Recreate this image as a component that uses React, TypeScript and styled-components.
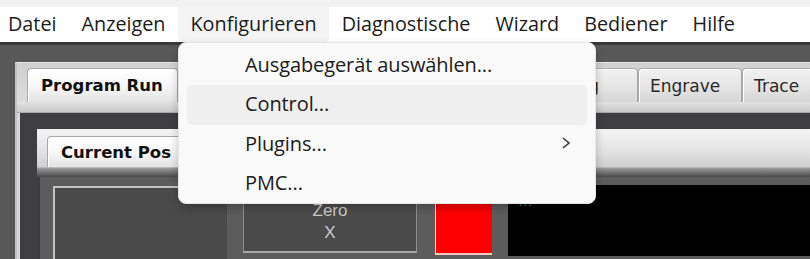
import React from 'react';
import styled, { createGlobalStyle, css } from 'styled-components';

const GlobalStyle = createGlobalStyle`
  html, body {
    margin: 0;
    padding: 0;
    width: 810px;
    height: 259px;
    overflow: hidden;
    background: #4a4a4a;
  }
`;

const Page = styled.div`
  position: relative;
  width: 810px;
  height: 259px;
  display: flex;
  flex-direction: column;
  font-family: "Open Sans", "Noto Sans", sans-serif;
`;

const TopStrip = styled.div`
  height: 7px;
  background: #f2f2f2;
`;

const MenuBar = styled.div`
  height: 35px;
  background: #ffffff;
  display: flex;
  align-items: stretch;
`;

const MenuItem = styled.div<{ $first?: boolean; $open?: boolean }>`
  display: flex;
  align-items: center;
  padding: 0 12px 2px ${({ $first }) => ($first ? '8px' : '13px')};
  font-size: 19.8px;
  color: #1b1b1b;
  border-radius: 0 0 4px 4px;
  ${({ $open }) =>
    $open &&
    css`
      background: #f4f4f4;
    `}
`;

const Main = styled.div`
  flex: 1;
  display: flex;
  background: #585858;
  border-top: 3px solid #393939;
  padding: 17px 0 0 15px;
`;

const OuterPanel = styled.div`
  flex: 1;
  display: flex;
  flex-direction: column;
  background: #d8d8d8;
  border-left: 2px solid #c4c4c4;
  border-top: 1px solid #e6e6e6;
`;

const TabBar = styled.div`
  display: flex;
  align-items: flex-end;
  height: 39px;
  padding-left: 10px;
  background: linear-gradient(#d0d0d0, #dcdcdc);
`;

const InnerTabBar = styled(TabBar)`
  height: 38px;
  padding-left: 10px;
  background: linear-gradient(#f4f4f4 0%, #e2e2e2 60%, #cfcfcf 100%);
`;

const Tab = styled.div<{ $active?: boolean; $w?: number; $h?: number; $end?: boolean }>`
  height: ${({ $h }) => $h ?? 34}px;
  box-sizing: border-box;
  width: ${({ $w }) => ($w ? `${$w}px` : 'auto')};
  display: flex;
  align-items: center;
  justify-content: ${({ $end }) => ($end ? 'flex-end' : 'flex-start')};
  padding: 0 ${({ $end }) => ($end ? '38px' : '12px')} 0 ${({ $active }) => ($active ? '13px' : '11px')};
  border: 1px solid #a9a9a9;
  border-bottom: none;
  border-radius: 4px 4px 0 0;
  font-family: "DejaVu Sans", Verdana, sans-serif;
  font-size: ${({ $active }) => ($active ? '16.5px' : '17px')};
  white-space: nowrap;
  overflow: hidden;
  color: ${({ $active }) => ($active ? '#111' : '#2a2a2a')};
  font-weight: ${({ $active }) => ($active ? 700 : 400)};
  background: ${({ $active }) =>
    $active
      ? 'linear-gradient(#ffffff 0%, #f7f7f7 50%, #e4e4e4 100%)'
      : 'linear-gradient(#f1f1f1 0%, #e6e6e6 50%, #d6d6d6 100%)'};
  box-shadow: inset 1px 1px 0 #ffffff;
`;

const Strip = styled.div`
  height: 10px;
  background: linear-gradient(#e2e2e2, #c9c9c9);
  border-bottom: 1px solid #a8a8a8;
`;

const InnerStrip = styled.div`
  height: 9px;
  background: linear-gradient(#9a9a9a, #6a6a6a 60%, #4a4a4a);
  border-top: 1px solid #b8b8b8;
`;

const OuterBody = styled.div`
  flex: 1;
  display: flex;
  margin-left: 3px;
  background: #3f3f41;
  padding: 16px 0 0 17px;
`;

const InnerPanel = styled.div`
  flex: 1;
  display: flex;
  flex-direction: column;
  background: #d8d8d8;
`;

const InnerBody = styled.div`
  flex: 1;
  display: flex;
  background: #5c5c5c;
  border-left: 3px solid #3c3c3c;
  padding: 0 0 0 13px;
`;

const PosBox = styled.div`
  width: 172px;
  margin-top: 9px;
  background: #4a4a4a;
  border-top: 2px solid #c2c2c2;
  border-left: 2px solid #c2c2c2;
`;

const ZeroButton = styled.div`
  width: 174px;
  margin: 9px 0 6px 16px;
  box-sizing: border-box;
  background: #4b4b4b;
  border: 1px solid #8c8c8c;
  border-bottom: 2px solid #a8a8a8;
  display: flex;
  flex-direction: column;
  align-items: center;
  justify-content: center;
  font-family: "Liberation Sans", Arial, sans-serif;
  font-size: 17px;
  line-height: 22px;
  color: #c9c9c9;
  padding-top: 5px;
`;

const Led = styled.div`
  width: 56px;
  margin: 9px 0 4px 18px;
  background: linear-gradient(#e00000, #ff0000 40%);
  border-left: 1px solid #f2d0d0;
  border-bottom: 2px solid #f0c8c8;
`;

const Screen = styled.div`
  flex: 1;
  margin: 8px 0 3px 16px;
  background: #000000;
  padding: 15px 0 0 10px;
  font-family: "DejaVu Sans Mono", monospace;
  font-size: 8px;
  line-height: 8px;
  color: #2fd02f;
`;

const Dropdown = styled.div`
  position: absolute;
  left: 178px;
  top: 42px;
  width: 418px;
  height: 162px;
  box-sizing: border-box;
  background: #f9f9f9;
  border: 1px solid #e4e4e4;
  border-radius: 8px;
  box-shadow: 0 4px 10px rgba(0, 0, 0, 0.22);
  padding: 3px 8px 0;
  display: flex;
  flex-direction: column;
`;

const DropItem = styled.div<{ $hover?: boolean }>`
  height: 38px;
  display: flex;
  align-items: center;
  padding: 0 16px 2px 58px;
  border-radius: 5px;
  font-size: 20px;
  letter-spacing: -0.1px;
  color: #1b1b1b;
  background: ${({ $hover }) => ($hover ? '#efefef' : 'transparent')};
`;

const Label = styled.span`
  flex: 1;
`;

const Chevron = () => (
  <svg width="10" height="14" viewBox="0 0 10 14">
    <polyline points="2,2 8,7 2,12" fill="none" stroke="#3a3a3a" strokeWidth="1.6" />
  </svg>
);

const menus = ['Datei', 'Anzeigen', 'Konfigurieren', 'Diagnostische', 'Wizard', 'Bediener', 'Hilfe'];

const items = ['Ausgabegerät auswählen...', 'Control...', 'Plugins...', 'PMC...'];

export default function App() {
  return (
    <Page>
      <GlobalStyle />
      <TopStrip />
      <MenuBar>
        {menus.map((m, i) => (
          <MenuItem key={m} $first={i === 0} $open={m === 'Konfigurieren'}>
            {m}
          </MenuItem>
        ))}
      </MenuBar>
      <Main>
        <OuterPanel>
          <TabBar>
            <Tab $active $w={151}>Program Run</Tab>
            <Tab $w={460} $end>Probing</Tab>
            <Tab $w={104}>Engrave</Tab>
            <Tab $w={90}>Trace</Tab>
          </TabBar>
          <Strip />
          <OuterBody>
            <InnerPanel>
              <InnerTabBar>
                <Tab $active $w={140} $h={31}>Current Pos</Tab>
              </InnerTabBar>
              <InnerStrip />
              <InnerBody>
                <PosBox />
                <ZeroButton>
                  <span>Zero</span>
                  <span>X</span>
                </ZeroButton>
                <Led />
                <Screen>...</Screen>
              </InnerBody>
            </InnerPanel>
          </OuterBody>
        </OuterPanel>
      </Main>
      <Dropdown>
        {items.map((it) => (
          <DropItem key={it} $hover={it === 'Control...'}>
            <Label>{it}</Label>
            {it === 'Plugins...' && <Chevron />}
          </DropItem>
        ))}
      </Dropdown>
    </Page>
  );
}
